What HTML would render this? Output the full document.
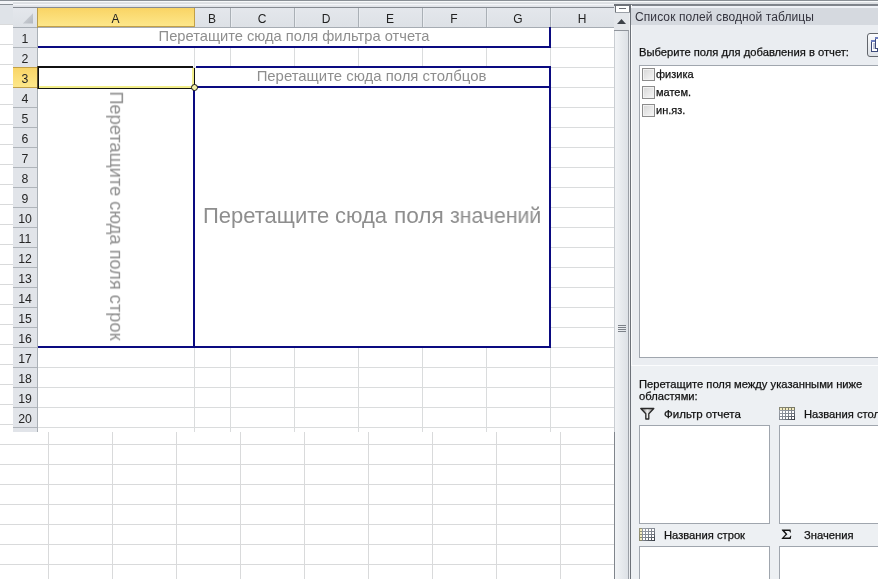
<!DOCTYPE html><html><head><meta charset="utf-8"><style>
html,body{margin:0;padding:0;}
body{width:878px;height:579px;overflow:hidden;position:relative;background:#fff;font-family:"Liberation Sans",sans-serif;}
body div{position:absolute;box-sizing:border-box;}
.p{-webkit-text-stroke:0.25px #111;}
.t{white-space:nowrap;line-height:1;-webkit-font-smoothing:antialiased;will-change:transform;}
</style></head><body>
<div style="left:0px;top:0px;width:13px;height:7px;background:#f2f4f7"></div>
<div style="left:0px;top:4px;width:13px;height:1px;background:#8a9096"></div>
<div style="left:0px;top:5px;width:13px;height:19px;background:#dfe3e8"></div>
<div style="left:0px;top:24px;width:614px;height:1px;background:#d9dadb"></div>
<div style="left:0px;top:44px;width:614px;height:1px;background:#d9dadb"></div>
<div style="left:0px;top:64px;width:614px;height:1px;background:#d9dadb"></div>
<div style="left:0px;top:84px;width:614px;height:1px;background:#d9dadb"></div>
<div style="left:0px;top:104px;width:614px;height:1px;background:#d9dadb"></div>
<div style="left:0px;top:124px;width:614px;height:1px;background:#d9dadb"></div>
<div style="left:0px;top:144px;width:614px;height:1px;background:#d9dadb"></div>
<div style="left:0px;top:164px;width:614px;height:1px;background:#d9dadb"></div>
<div style="left:0px;top:184px;width:614px;height:1px;background:#d9dadb"></div>
<div style="left:0px;top:204px;width:614px;height:1px;background:#d9dadb"></div>
<div style="left:0px;top:224px;width:614px;height:1px;background:#d9dadb"></div>
<div style="left:0px;top:244px;width:614px;height:1px;background:#d9dadb"></div>
<div style="left:0px;top:264px;width:614px;height:1px;background:#d9dadb"></div>
<div style="left:0px;top:284px;width:614px;height:1px;background:#d9dadb"></div>
<div style="left:0px;top:304px;width:614px;height:1px;background:#d9dadb"></div>
<div style="left:0px;top:324px;width:614px;height:1px;background:#d9dadb"></div>
<div style="left:0px;top:344px;width:614px;height:1px;background:#d9dadb"></div>
<div style="left:0px;top:364px;width:614px;height:1px;background:#d9dadb"></div>
<div style="left:0px;top:384px;width:614px;height:1px;background:#d9dadb"></div>
<div style="left:0px;top:404px;width:614px;height:1px;background:#d9dadb"></div>
<div style="left:0px;top:424px;width:614px;height:1px;background:#d9dadb"></div>
<div style="left:0px;top:444px;width:614px;height:1px;background:#d9dadb"></div>
<div style="left:0px;top:464px;width:614px;height:1px;background:#d9dadb"></div>
<div style="left:0px;top:484px;width:614px;height:1px;background:#d9dadb"></div>
<div style="left:0px;top:504px;width:614px;height:1px;background:#d9dadb"></div>
<div style="left:0px;top:524px;width:614px;height:1px;background:#d9dadb"></div>
<div style="left:0px;top:544px;width:614px;height:1px;background:#d9dadb"></div>
<div style="left:0px;top:564px;width:614px;height:1px;background:#d9dadb"></div>
<div style="left:48px;top:432px;width:1px;height:147px;background:#d9dadb"></div>
<div style="left:112px;top:432px;width:1px;height:147px;background:#d9dadb"></div>
<div style="left:176px;top:432px;width:1px;height:147px;background:#d9dadb"></div>
<div style="left:240px;top:432px;width:1px;height:147px;background:#d9dadb"></div>
<div style="left:304px;top:432px;width:1px;height:147px;background:#d9dadb"></div>
<div style="left:368px;top:432px;width:1px;height:147px;background:#d9dadb"></div>
<div style="left:432px;top:432px;width:1px;height:147px;background:#d9dadb"></div>
<div style="left:496px;top:432px;width:1px;height:147px;background:#d9dadb"></div>
<div style="left:560px;top:432px;width:1px;height:147px;background:#d9dadb"></div>
<div style="left:624px;top:432px;width:1px;height:147px;background:#d9dadb"></div>
<div style="left:614px;top:432px;width:1px;height:147px;background:#6d7177"></div>
<div style="left:13px;top:0px;width:865px;height:1px;background:#8a9096"></div>
<div style="left:13px;top:1px;width:865px;height:1px;background:#f8fafb"></div>
<div style="left:13px;top:2px;width:865px;height:1px;background:#dfe2e5"></div>
<div style="left:13px;top:3px;width:865px;height:1px;background:#dcdfe3"></div>
<div style="left:13px;top:4px;width:865px;height:1px;background:#f4f6f9"></div>
<div style="left:13px;top:5px;width:865px;height:1px;background:#e6e8ec"></div>
<div style="left:13px;top:6px;width:865px;height:1px;background:#e0e3e8"></div>
<div style="left:0px;top:0px;width:13px;height:1px;background:#8a9096"></div>
<div style="left:13px;top:7px;width:601px;height:425px;background:#fff"></div>
<div style="left:13px;top:7px;width:604px;height:1px;background:#868b92"></div>
<div style="left:13px;top:8px;width:601px;height:19px;background:linear-gradient(#e4e7ec,#dde1e6)"></div>
<div style="left:13px;top:27px;width:601px;height:1px;background:#a6acb3"></div>
<div style="left:13px;top:28px;width:24px;height:404px;background:#e1e4e9"></div>
<div style="left:37px;top:8px;width:1px;height:424px;background:#aab0b6"></div>
<svg style="position:absolute;left:13px;top:8px" width="24" height="19"><defs><linearGradient id="tg" x1="0" y1="0" x2="1" y2="1"><stop offset="0" stop-color="#d3d7dc"/><stop offset="1" stop-color="#b3b8bf"/></linearGradient></defs><polygon points="20,5.3 20,15.6 9.8,15.6" fill="url(#tg)"/></svg>
<div style="left:194px;top:28px;width:1px;height:404px;background:#dadcdd"></div>
<div style="left:230px;top:28px;width:1px;height:404px;background:#dadcdd"></div>
<div style="left:294px;top:28px;width:1px;height:404px;background:#dadcdd"></div>
<div style="left:358px;top:28px;width:1px;height:404px;background:#dadcdd"></div>
<div style="left:422px;top:28px;width:1px;height:404px;background:#dadcdd"></div>
<div style="left:486px;top:28px;width:1px;height:404px;background:#dadcdd"></div>
<div style="left:550px;top:28px;width:1px;height:404px;background:#dadcdd"></div>
<div style="left:38px;top:47px;width:576px;height:1px;background:#dadcdd"></div>
<div style="left:13px;top:47px;width:24px;height:1px;background:#afb4ba"></div>
<div style="left:38px;top:67px;width:576px;height:1px;background:#dadcdd"></div>
<div style="left:13px;top:67px;width:24px;height:1px;background:#afb4ba"></div>
<div style="left:38px;top:87px;width:576px;height:1px;background:#dadcdd"></div>
<div style="left:13px;top:87px;width:24px;height:1px;background:#afb4ba"></div>
<div style="left:38px;top:107px;width:576px;height:1px;background:#dadcdd"></div>
<div style="left:13px;top:107px;width:24px;height:1px;background:#afb4ba"></div>
<div style="left:38px;top:127px;width:576px;height:1px;background:#dadcdd"></div>
<div style="left:13px;top:127px;width:24px;height:1px;background:#afb4ba"></div>
<div style="left:38px;top:147px;width:576px;height:1px;background:#dadcdd"></div>
<div style="left:13px;top:147px;width:24px;height:1px;background:#afb4ba"></div>
<div style="left:38px;top:167px;width:576px;height:1px;background:#dadcdd"></div>
<div style="left:13px;top:167px;width:24px;height:1px;background:#afb4ba"></div>
<div style="left:38px;top:187px;width:576px;height:1px;background:#dadcdd"></div>
<div style="left:13px;top:187px;width:24px;height:1px;background:#afb4ba"></div>
<div style="left:38px;top:207px;width:576px;height:1px;background:#dadcdd"></div>
<div style="left:13px;top:207px;width:24px;height:1px;background:#afb4ba"></div>
<div style="left:38px;top:227px;width:576px;height:1px;background:#dadcdd"></div>
<div style="left:13px;top:227px;width:24px;height:1px;background:#afb4ba"></div>
<div style="left:38px;top:247px;width:576px;height:1px;background:#dadcdd"></div>
<div style="left:13px;top:247px;width:24px;height:1px;background:#afb4ba"></div>
<div style="left:38px;top:267px;width:576px;height:1px;background:#dadcdd"></div>
<div style="left:13px;top:267px;width:24px;height:1px;background:#afb4ba"></div>
<div style="left:38px;top:287px;width:576px;height:1px;background:#dadcdd"></div>
<div style="left:13px;top:287px;width:24px;height:1px;background:#afb4ba"></div>
<div style="left:38px;top:307px;width:576px;height:1px;background:#dadcdd"></div>
<div style="left:13px;top:307px;width:24px;height:1px;background:#afb4ba"></div>
<div style="left:38px;top:327px;width:576px;height:1px;background:#dadcdd"></div>
<div style="left:13px;top:327px;width:24px;height:1px;background:#afb4ba"></div>
<div style="left:38px;top:347px;width:576px;height:1px;background:#dadcdd"></div>
<div style="left:13px;top:347px;width:24px;height:1px;background:#afb4ba"></div>
<div style="left:38px;top:367px;width:576px;height:1px;background:#dadcdd"></div>
<div style="left:13px;top:367px;width:24px;height:1px;background:#afb4ba"></div>
<div style="left:38px;top:387px;width:576px;height:1px;background:#dadcdd"></div>
<div style="left:13px;top:387px;width:24px;height:1px;background:#afb4ba"></div>
<div style="left:38px;top:407px;width:576px;height:1px;background:#dadcdd"></div>
<div style="left:13px;top:407px;width:24px;height:1px;background:#afb4ba"></div>
<div style="left:38px;top:427px;width:576px;height:1px;background:#dadcdd"></div>
<div style="left:13px;top:427px;width:24px;height:1px;background:#afb4ba"></div>
<div style="left:38px;top:8px;width:156px;height:19px;background:linear-gradient(#f9d465,#fde88c)"></div>
<div style="left:38px;top:26px;width:157px;height:1px;background:#c2a047"></div>
<div style="left:194px;top:8px;width:1px;height:19px;background:#c2a047"></div>
<div style="left:37px;top:8px;width:1px;height:20px;background:#b89c4c"></div>
<div class="t" style="left:37px;top:13px;width:157px;text-align:center;font-size:12px;color:#222">A</div>
<div style="left:230px;top:8px;width:1px;height:19px;background:#aab0b6"></div>
<div style="left:231px;top:8px;width:1px;height:19px;background:#e9ecf0"></div>
<div class="t" style="left:194px;top:13px;width:36px;text-align:center;font-size:12px;color:#222">B</div>
<div style="left:294px;top:8px;width:1px;height:19px;background:#aab0b6"></div>
<div style="left:295px;top:8px;width:1px;height:19px;background:#e9ecf0"></div>
<div class="t" style="left:230px;top:13px;width:64px;text-align:center;font-size:12px;color:#222">C</div>
<div style="left:358px;top:8px;width:1px;height:19px;background:#aab0b6"></div>
<div style="left:359px;top:8px;width:1px;height:19px;background:#e9ecf0"></div>
<div class="t" style="left:294px;top:13px;width:64px;text-align:center;font-size:12px;color:#222">D</div>
<div style="left:422px;top:8px;width:1px;height:19px;background:#aab0b6"></div>
<div style="left:423px;top:8px;width:1px;height:19px;background:#e9ecf0"></div>
<div class="t" style="left:358px;top:13px;width:64px;text-align:center;font-size:12px;color:#222">E</div>
<div style="left:486px;top:8px;width:1px;height:19px;background:#aab0b6"></div>
<div style="left:487px;top:8px;width:1px;height:19px;background:#e9ecf0"></div>
<div class="t" style="left:422px;top:13px;width:64px;text-align:center;font-size:12px;color:#222">F</div>
<div style="left:550px;top:8px;width:1px;height:19px;background:#aab0b6"></div>
<div style="left:551px;top:8px;width:1px;height:19px;background:#e9ecf0"></div>
<div class="t" style="left:486px;top:13px;width:64px;text-align:center;font-size:12px;color:#222">G</div>
<div style="left:614px;top:8px;width:1px;height:19px;background:#aab0b6"></div>
<div class="t" style="left:550px;top:13px;width:64px;text-align:center;font-size:12px;color:#222">H</div>
<div class="t" style="left:13px;top:33px;width:24px;text-align:center;font-size:12.3px;color:#262626">1</div>
<div class="t" style="left:13px;top:53px;width:24px;text-align:center;font-size:12.3px;color:#262626">2</div>
<div style="left:13px;top:67px;width:24px;height:21px;background:linear-gradient(#f9d465,#fde88c)"></div>
<div style="left:13px;top:67px;width:24px;height:1px;background:#c2a047"></div>
<div style="left:13px;top:87px;width:24px;height:1px;background:#c2a047"></div>
<div class="t" style="left:13px;top:73px;width:24px;text-align:center;font-size:12.3px;color:#262626">3</div>
<div class="t" style="left:13px;top:93px;width:24px;text-align:center;font-size:12.3px;color:#262626">4</div>
<div class="t" style="left:13px;top:113px;width:24px;text-align:center;font-size:12.3px;color:#262626">5</div>
<div class="t" style="left:13px;top:133px;width:24px;text-align:center;font-size:12.3px;color:#262626">6</div>
<div class="t" style="left:13px;top:153px;width:24px;text-align:center;font-size:12.3px;color:#262626">7</div>
<div class="t" style="left:13px;top:173px;width:24px;text-align:center;font-size:12.3px;color:#262626">8</div>
<div class="t" style="left:13px;top:193px;width:24px;text-align:center;font-size:12.3px;color:#262626">9</div>
<div class="t" style="left:13px;top:213px;width:24px;text-align:center;font-size:12.3px;color:#262626">10</div>
<div class="t" style="left:13px;top:233px;width:24px;text-align:center;font-size:12.3px;color:#262626">11</div>
<div class="t" style="left:13px;top:253px;width:24px;text-align:center;font-size:12.3px;color:#262626">12</div>
<div class="t" style="left:13px;top:273px;width:24px;text-align:center;font-size:12.3px;color:#262626">13</div>
<div class="t" style="left:13px;top:293px;width:24px;text-align:center;font-size:12.3px;color:#262626">14</div>
<div class="t" style="left:13px;top:313px;width:24px;text-align:center;font-size:12.3px;color:#262626">15</div>
<div class="t" style="left:13px;top:333px;width:24px;text-align:center;font-size:12.3px;color:#262626">16</div>
<div class="t" style="left:13px;top:353px;width:24px;text-align:center;font-size:12.3px;color:#262626">17</div>
<div class="t" style="left:13px;top:373px;width:24px;text-align:center;font-size:12.3px;color:#262626">18</div>
<div class="t" style="left:13px;top:393px;width:24px;text-align:center;font-size:12.3px;color:#262626">19</div>
<div class="t" style="left:13px;top:413px;width:24px;text-align:center;font-size:12.3px;color:#262626">20</div>
<div style="left:38px;top:28px;width:512px;height:19px;background:#fff"></div>
<div style="left:195px;top:68px;width:355px;height:19px;background:#fff"></div>
<div style="left:38px;top:88px;width:156px;height:259px;background:#fff"></div>
<div style="left:195px;top:88px;width:355px;height:259px;background:#fff"></div>
<div style="left:38px;top:46px;width:513px;height:2px;background:#0a0a80"></div>
<div style="left:549px;top:27px;width:2px;height:20px;background:#0a0a80"></div>
<div style="left:196px;top:66px;width:355px;height:2px;background:#0a0a80"></div>
<div style="left:194px;top:86px;width:357px;height:2px;background:#0a0a80"></div>
<div style="left:549px;top:66px;width:2px;height:282px;background:#0a0a80"></div>
<div style="left:38px;top:346px;width:513px;height:2px;background:#0a0a80"></div>
<div style="left:193px;top:86px;width:2px;height:262px;background:#0a0a80"></div>
<div style="left:38px;top:66px;width:155px;height:2px;background:#111"></div>
<div style="left:37px;top:66px;width:1px;height:23px;background:#5a4d2a"></div>
<div style="left:38px;top:66px;width:1px;height:23px;background:#111"></div>
<div style="left:39px;top:86px;width:153px;height:2px;background:#f2ee8a"></div>
<div style="left:38px;top:88px;width:154px;height:1px;background:#111"></div>
<div style="left:192px;top:68px;width:2px;height:19px;background:#f2ee8a"></div>
<div style="left:194px;top:68px;width:1px;height:17px;background:#111"></div>
<div style="left:191px;top:84px;width:7px;height:7px;border-radius:50%;background:#f4f1a8;border:1px solid #111"></div>
<div class="t" style="left:38px;top:28px;width:512px;text-align:center;font-size:14.7px;transform:translateY(0.8px) scaleY(1.03);transform-origin:50% 2px;color:#8e8e8e">Перетащите сюда поля фильтра отчета</div>
<div class="t" style="left:194px;top:68px;width:355px;text-align:center;font-size:14.9px;transform:translateY(1px) scaleY(1.03);transform-origin:50% 2px;color:#8e8e8e">Перетащите сюда поля столбцов</div>
<div class="t" style="left:203px;top:205px;font-size:22px;color:#8e8e8e;transform:scaleX(1.0);transform-origin:0 0">Перетащите</div>
<div class="t" style="left:334.5px;top:205px;font-size:22px;color:#8e8e8e;transform:scaleX(1.0);transform-origin:0 0">сюда</div>
<div class="t" style="left:394.2px;top:205px;font-size:22px;color:#8e8e8e;transform:scaleX(1.03);transform-origin:0 0">поля</div>
<div class="t" style="left:450.2px;top:205px;font-size:22px;color:#8e8e8e;transform:scaleX(0.967);transform-origin:0 0">значений</div>
<div class="t" style="left:116px;top:216px;width:0;height:0;"><div class="t" style="left:0;top:0;transform:translate(-50%,-50%) rotate(90deg);font-size:18.25px;color:#8e8e8e">Перетащите сюда поля строк</div></div>
<div style="left:614px;top:4px;width:17px;height:575px;background:#e3e6ea"></div>
<div style="left:614px;top:4px;width:17px;height:2px;background:#6e7278"></div>
<div style="left:615px;top:4px;width:1px;height:9px;background:#6e7278"></div>
<div style="left:629px;top:4px;width:1px;height:9px;background:#6e7278"></div>
<div style="left:616px;top:6px;width:13px;height:6px;background:#fff"></div>
<div style="left:619px;top:8px;width:7px;height:1px;background:#6a6e74"></div>
<div style="left:615px;top:12px;width:15px;height:1px;background:#9ca1a8"></div>
<svg style="position:absolute;left:614px;top:16px" width="16" height="12"><polygon points="3,8 12,8 7.5,3" fill="#3c4148"/></svg>
<div style="left:614px;top:30px;width:15px;height:549px;background:linear-gradient(90deg,#f3f5f7,#dde1e6);border-top:1px solid #8f949b;border-right:1px solid #9ba0a7"></div>
<div style="left:614px;top:31px;width:1px;height:548px;background:#c9cdd2"></div>
<div style="left:618px;top:325px;width:8px;height:1px;background:#7c8188"></div>
<div style="left:618px;top:327px;width:8px;height:1px;background:#7c8188"></div>
<div style="left:618px;top:329px;width:8px;height:1px;background:#7c8188"></div>
<div style="left:618px;top:331px;width:8px;height:1px;background:#7c8188"></div>
<div style="left:629px;top:13px;width:1px;height:566px;background:#eceef1"></div>
<div style="left:630px;top:4px;width:1px;height:575px;background:#6d7279"></div>
<div style="left:614px;top:432px;width:1px;height:147px;background:#80858c"></div>
<div style="left:631px;top:4px;width:247px;height:575px;background:#eaedf1"></div>
<div style="left:631px;top:4px;width:247px;height:2px;background:#7f848b"></div>
<div style="left:631px;top:6px;width:247px;height:2px;background:#eef1f6"></div>
<div style="left:631px;top:5px;width:1px;height:574px;background:#fafbfc"></div>
<div style="left:631px;top:8px;width:247px;height:17px;background:#d5d9df"></div>
<div class="t" style="left:635px;top:11px;font-size:12px;letter-spacing:0.09px;color:#33333d">Список полей сводной таблицы</div>
<div class="t p" style="left:639px;top:47px;font-size:11.2px;color:#111">Выберите поля для добавления в отчет:</div>
<div style="left:867px;top:33px;width:20px;height:24px;background:linear-gradient(#fbfcfd,#dde1e6);border:1px solid #62666c;border-radius:3px"></div>
<svg style="position:absolute;left:868px;top:34px" width="10" height="22"><rect x="3.5" y="6.5" width="6" height="11" fill="#fff" stroke="#3c4a7a"/><rect x="3" y="6" width="7" height="2" fill="#6d7fc0"/><path d="M5 10h3M5 12h3M5 14h3" stroke="#7a86a8"/><rect x="7.5" y="3.5" width="6" height="11" fill="#fff" stroke="#3c4a7a"/><rect x="7" y="3" width="7" height="2" fill="#6d7fc0"/></svg>
<div style="left:639px;top:65px;width:245px;height:293px;background:#fff;border:1px solid #a0a6ae"></div>
<div style="left:642px;top:68px;width:13px;height:13px;background:linear-gradient(135deg,#d6d6d6,#f8f8f8);border:1px solid #8c8c8c;box-shadow:inset 0 0 0 1px #f2f2f2"></div>
<div class="t p" style="left:656px;top:69px;font-size:11px;color:#111">физика</div>
<div style="left:642px;top:86px;width:13px;height:13px;background:linear-gradient(135deg,#d6d6d6,#f8f8f8);border:1px solid #8c8c8c;box-shadow:inset 0 0 0 1px #f2f2f2"></div>
<div class="t p" style="left:656px;top:87px;font-size:11px;color:#111">матем.</div>
<div style="left:642px;top:104px;width:13px;height:13px;background:linear-gradient(135deg,#d6d6d6,#f8f8f8);border:1px solid #8c8c8c;box-shadow:inset 0 0 0 1px #f2f2f2"></div>
<div class="t p" style="left:656px;top:105px;font-size:11px;color:#111">ин.яз.</div>
<div style="left:631px;top:366px;width:247px;height:213px;background:#edf0f3"></div>
<div style="left:631px;top:365px;width:247px;height:1px;background:#fbfcfd"></div>
<div class="t p" style="left:639px;top:378px;font-size:11.2px;color:#111;line-height:12px">Перетащите поля между указанными ниже<br>областями:</div>
<svg style="position:absolute;left:640px;top:407px" width="15" height="13"><defs><linearGradient id="fg" x1="0" x2="1"><stop offset="0" stop-color="#555"/><stop offset="0.5" stop-color="#eee"/><stop offset="1" stop-color="#777"/></linearGradient></defs><path d="M0.8 1.5 L13.8 1.5 L8.8 6.8 L8.8 12 L5.8 12 L5.8 6.8 Z" fill="url(#fg)" stroke="#2a2a2a" stroke-width="1.3" stroke-linejoin="round"/></svg>
<div class="t p" style="left:664px;top:409px;font-size:11.5px;color:#111">Фильтр отчета</div>
<svg style="position:absolute;left:779px;top:407px" width="16" height="13"><defs><linearGradient id="gg779407" x1="0" y1="0" x2="1" y2="1"><stop offset="0" stop-color="#a3a8b0"/><stop offset="0.6" stop-color="#7d838c"/><stop offset="1" stop-color="#30353d"/></linearGradient></defs><rect x="0" y="0" width="16" height="13" fill="url(#gg779407)"/><rect x="0" y="0" width="16" height="3" fill="#6f6a3a" opacity="0.5"/><rect x="1" y="1" width="2" height="2" fill="#f3ecc0"/><rect x="4" y="1" width="2" height="2" fill="#f3ecc0"/><rect x="7" y="1" width="2" height="2" fill="#f3ecc0"/><rect x="10" y="1" width="2" height="2" fill="#f3ecc0"/><rect x="13" y="1" width="2" height="2" fill="#f3ecc0"/><rect x="1" y="4" width="2" height="2" fill="#ffffff"/><rect x="4" y="4" width="2" height="2" fill="#ffffff"/><rect x="7" y="4" width="2" height="2" fill="#ffffff"/><rect x="10" y="4" width="2" height="2" fill="#ffffff"/><rect x="13" y="4" width="2" height="2" fill="#ffffff"/><rect x="1" y="7" width="2" height="2" fill="#ffffff"/><rect x="4" y="7" width="2" height="2" fill="#ffffff"/><rect x="7" y="7" width="2" height="2" fill="#ffffff"/><rect x="10" y="7" width="2" height="2" fill="#ffffff"/><rect x="13" y="7" width="2" height="2" fill="#ffffff"/><rect x="1" y="10" width="2" height="2" fill="#ffffff"/><rect x="4" y="10" width="2" height="2" fill="#ffffff"/><rect x="7" y="10" width="2" height="2" fill="#ffffff"/><rect x="10" y="10" width="2" height="2" fill="#ffffff"/><rect x="13" y="10" width="2" height="2" fill="#ffffff"/></svg>
<div class="t p" style="left:804px;top:409px;font-size:11.2px;color:#111">Названия столбцов</div>
<div style="left:639px;top:425px;width:131px;height:99px;background:#fff;border:1px solid #a0a6ae"></div>
<div style="left:779px;top:425px;width:110px;height:99px;background:#fff;border:1px solid #a0a6ae"></div>
<svg style="position:absolute;left:639px;top:528px" width="16" height="13"><defs><linearGradient id="gg639528" x1="0" y1="0" x2="1" y2="1"><stop offset="0" stop-color="#a3a8b0"/><stop offset="0.6" stop-color="#7d838c"/><stop offset="1" stop-color="#30353d"/></linearGradient></defs><rect x="0" y="0" width="16" height="13" fill="url(#gg639528)"/><rect x="0" y="0" width="3" height="13" fill="#8f8440" opacity="0.45"/><rect x="1" y="1" width="2" height="2" fill="#f3ecc0"/><rect x="4" y="1" width="2" height="2" fill="#ffffff"/><rect x="7" y="1" width="2" height="2" fill="#ffffff"/><rect x="10" y="1" width="2" height="2" fill="#ffffff"/><rect x="13" y="1" width="2" height="2" fill="#ffffff"/><rect x="1" y="4" width="2" height="2" fill="#f3ecc0"/><rect x="4" y="4" width="2" height="2" fill="#ffffff"/><rect x="7" y="4" width="2" height="2" fill="#ffffff"/><rect x="10" y="4" width="2" height="2" fill="#ffffff"/><rect x="13" y="4" width="2" height="2" fill="#ffffff"/><rect x="1" y="7" width="2" height="2" fill="#f3ecc0"/><rect x="4" y="7" width="2" height="2" fill="#ffffff"/><rect x="7" y="7" width="2" height="2" fill="#ffffff"/><rect x="10" y="7" width="2" height="2" fill="#ffffff"/><rect x="13" y="7" width="2" height="2" fill="#ffffff"/><rect x="1" y="10" width="2" height="2" fill="#f3ecc0"/><rect x="4" y="10" width="2" height="2" fill="#ffffff"/><rect x="7" y="10" width="2" height="2" fill="#ffffff"/><rect x="10" y="10" width="2" height="2" fill="#ffffff"/><rect x="13" y="10" width="2" height="2" fill="#ffffff"/></svg>
<div class="t p" style="left:664px;top:530px;font-size:11.2px;color:#111">Названия строк</div>
<svg style="position:absolute;left:781px;top:529px" width="11" height="11"><path d="M0.8,0.6 L9.6,0.6 L9.9,3.6 L9.1,3.6 C8.8,2.4 8.2,2.1 6.9,2.1 L3.6,2.1 L6.4,5.2 L3.0,8.6 L7.2,8.6 C8.5,8.6 9.0,8.2 9.5,6.8 L10.3,6.8 L9.7,10.0 L0.6,10.0 L0.6,9.4 L4.6,5.3 L0.8,1.2 Z" fill="#111"/></svg>
<div class="t p" style="left:804px;top:530px;font-size:11.2px;color:#111">Значения</div>
<div style="left:639px;top:546px;width:131px;height:40px;background:#fff;border:1px solid #a0a6ae"></div>
<div style="left:779px;top:546px;width:110px;height:40px;background:#fff;border:1px solid #a0a6ae"></div>
</body></html>
